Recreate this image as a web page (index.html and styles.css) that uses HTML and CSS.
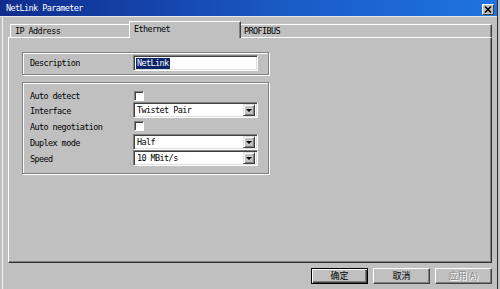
FILE: index.html
```html
<!DOCTYPE html>
<html>
<head>
<meta charset="utf-8">
<link rel="stylesheet" href="styles.css">
</head>
<body>
<div class="window">
  <div class="inner">
    <div class="titlebar">
      <span class="title">NetLink Parameter</span>
      <span class="close"><svg width="8" height="7" viewBox="0 0 8 7"><path d="M1 0.5L7 6.5M7 0.5L1 6.5" stroke="#000" stroke-width="1.6"/></svg></span>
    </div>
    <div class="client">
      <div class="tabs">
        <div class="tab tab-ip">IP Address</div>
        <div class="tab tab-active">Ethernet</div>
        <div class="tab tab-pb">PROFIBUS</div>
      </div>
      <div class="panel">
        <div class="group group-desc">
          <span class="label">Description</span>
          <div class="textbox"><span class="sel">NetLink</span></div>
        </div>
        <div class="group group-eth">
          <span class="label">Auto detect</span>
          <span class="checkbox"></span>
          <span class="label">Interface</span>
          <div class="combo"><span class="combo-text">Twistet Pair</span><span class="arrow"><i></i></span></div>
          <span class="label">Auto negotiation</span>
          <span class="checkbox"></span>
          <span class="label">Duplex mode</span>
          <div class="combo"><span class="combo-text">Half</span><span class="arrow"><i></i></span></div>
          <span class="label">Speed</span>
          <div class="combo"><span class="combo-text">10 MBit/s</span><span class="arrow"><i></i></span></div>
        </div>
      </div>
      <div class="buttons">
        <button class="btn btn-default">确定</button>
        <button class="btn">取消</button>
        <button class="btn btn-disabled">应用(A)</button>
      </div>
    </div>
  </div>
</div>
</body>
</html>
```
FILE: styles.css
```css
* { box-sizing: border-box; }
body {
  margin: 0;
  background: #c0c0c0;
  font-family: "DejaVu Sans Mono", "Liberation Mono", monospace;
  font-size: 8.5px;
  letter-spacing: -0.6px;
  color: #000;
}
.window {
  width: 500px;
  height: 289px;
  background: #c0c0c0;
  padding-right: 2px;
  overflow: hidden;
}
.inner {
  height: 289px;
  border-right: 1px solid #303030;
  display: flex;
  flex-direction: column;
}
.titlebar {
  height: 17px;
  background: linear-gradient(to right, #0f2c8c, #1a5cc8 60%, #1e74e0);
  display: flex;
  align-items: center;
  justify-content: space-between;
  padding-left: 6px;
  padding-right: 3px;
  border-bottom: 1px solid #e8e8e8;
}
.title {
  color: #fff;
  line-height: 17px;
  padding-top: 1px;
}
.close {
  width: 12px;
  height: 11px;
  margin-top: 2px;
  background: #c0c0c0;
  border: 1px solid;
  border-color: #fff #404040 #404040 #fff;
  display: flex;
  align-items: center;
  justify-content: center;
}
.client {
  flex: 1;
  margin-left: 2px;
  border-left: 1px solid #f4f4f4;
  padding-left: 5px;
  display: flex;
  flex-direction: column;
}
.tabs {
  height: 20px;
  display: flex;
  align-items: flex-end;
  padding-left: 2px;
}
.tab {
  height: 13px;
  border-top: 1px solid #fff;
  border-left: 1px solid #fff;
  border-right: 1px solid #404040;
  line-height: 13px;
  white-space: nowrap;
}
.tab-ip {
  width: 119px;
  padding-left: 4px;
  border-right: none;
}
.tab-active {
  width: 112px;
  height: 17px;
  padding-left: 4px;
  line-height: 14px;
  margin-bottom: -1px;
  position: relative;
  background: #c0c0c0;
  box-shadow: inset -1px 0 #808080;
}
.tab-pb {
  width: 251px;
  padding-left: 3px;
  border-left: none;
  box-shadow: inset -1px 0 #808080;
}
.panel {
  width: 484px;
  height: 226px;
  border: 1px solid;
  border-color: #fff #303030 #303030 #fff;
  box-shadow: inset -1px -1px #808080;
  padding: 14px 0 0 13px;
}
.group {
  width: 247px;
  border: 1px solid #808080;
  box-shadow: inset 1px 1px #fff, 1px 1px #fff;
}
.group-desc {
  height: 23px;
  padding: 2px 0 0 7px;
  display: flex;
}
.group-eth {
  margin-top: 7px;
  height: 92px;
  padding: 6px 0 0 7px;
  display: grid;
  grid-template-columns: 103px 125px;
  grid-template-rows: 13px 16px 16px 16px 16px;
  align-items: center;
}
.group-eth .label {
  padding-top: 1px;
}
.group-desc .label {
  width: 103px;
  line-height: 17px;
}
.textbox, .combo {
  width: 125px;
  height: 16px;
  background: #fff;
  border: 1px solid;
  border-color: #808080 #fff #fff #808080;
  box-shadow: inset 1px 1px #404040, inset -1px -1px #dfdfdf;
  padding: 2px;
  display: flex;
  align-items: center;
}
.sel {
  background: #0a246a;
  color: #fff;
  line-height: 11px;
  padding: 0 1px;
}
.checkbox {
  width: 10px;
  height: 10px;
  margin-left: 1px;
  background: #fff;
  border: 1px solid;
  border-color: #808080 #fff #fff #808080;
  box-shadow: inset 1px 1px #404040;
}
.combo-text {
  flex: 1;
  padding-left: 1px;
}
.arrow {
  width: 12px;
  height: 12px;
  background: #c0c0c0;
  border: 1px solid;
  border-color: #dfdfdf #404040 #404040 #dfdfdf;
  box-shadow: inset 1px 1px #fff, inset -1px -1px #808080;
  display: flex;
  align-items: center;
  justify-content: center;
}
.arrow i {
  width: 0;
  height: 0;
  border-left: 3px solid transparent;
  border-right: 3px solid transparent;
  border-top: 3px solid #000;
  margin-top: 1px;
}
.buttons {
  width: 484px;
  display: flex;
  justify-content: flex-end;
  gap: 5px;
  padding-top: 5px;
}
.btn {
  width: 57px;
  height: 16px;
  margin: 0;
  padding: 0;
  background: #c0c0c0;
  border: 1px solid;
  border-color: #fff #404040 #404040 #fff;
  box-shadow: inset -1px -1px #808080;
  font-family: "Noto Sans CJK SC", sans-serif;
  font-size: 9px;
  letter-spacing: 0;
  color: #000;
  line-height: 12px;
}
.btn-default {
  border: 1px solid #000;
  box-shadow: inset 1px 1px #fff, inset -1px -1px #404040, inset -2px -2px #808080;
}
.btn-disabled {
  color: #8a8a8a;
  text-shadow: 1px 1px #fff;
}
```
